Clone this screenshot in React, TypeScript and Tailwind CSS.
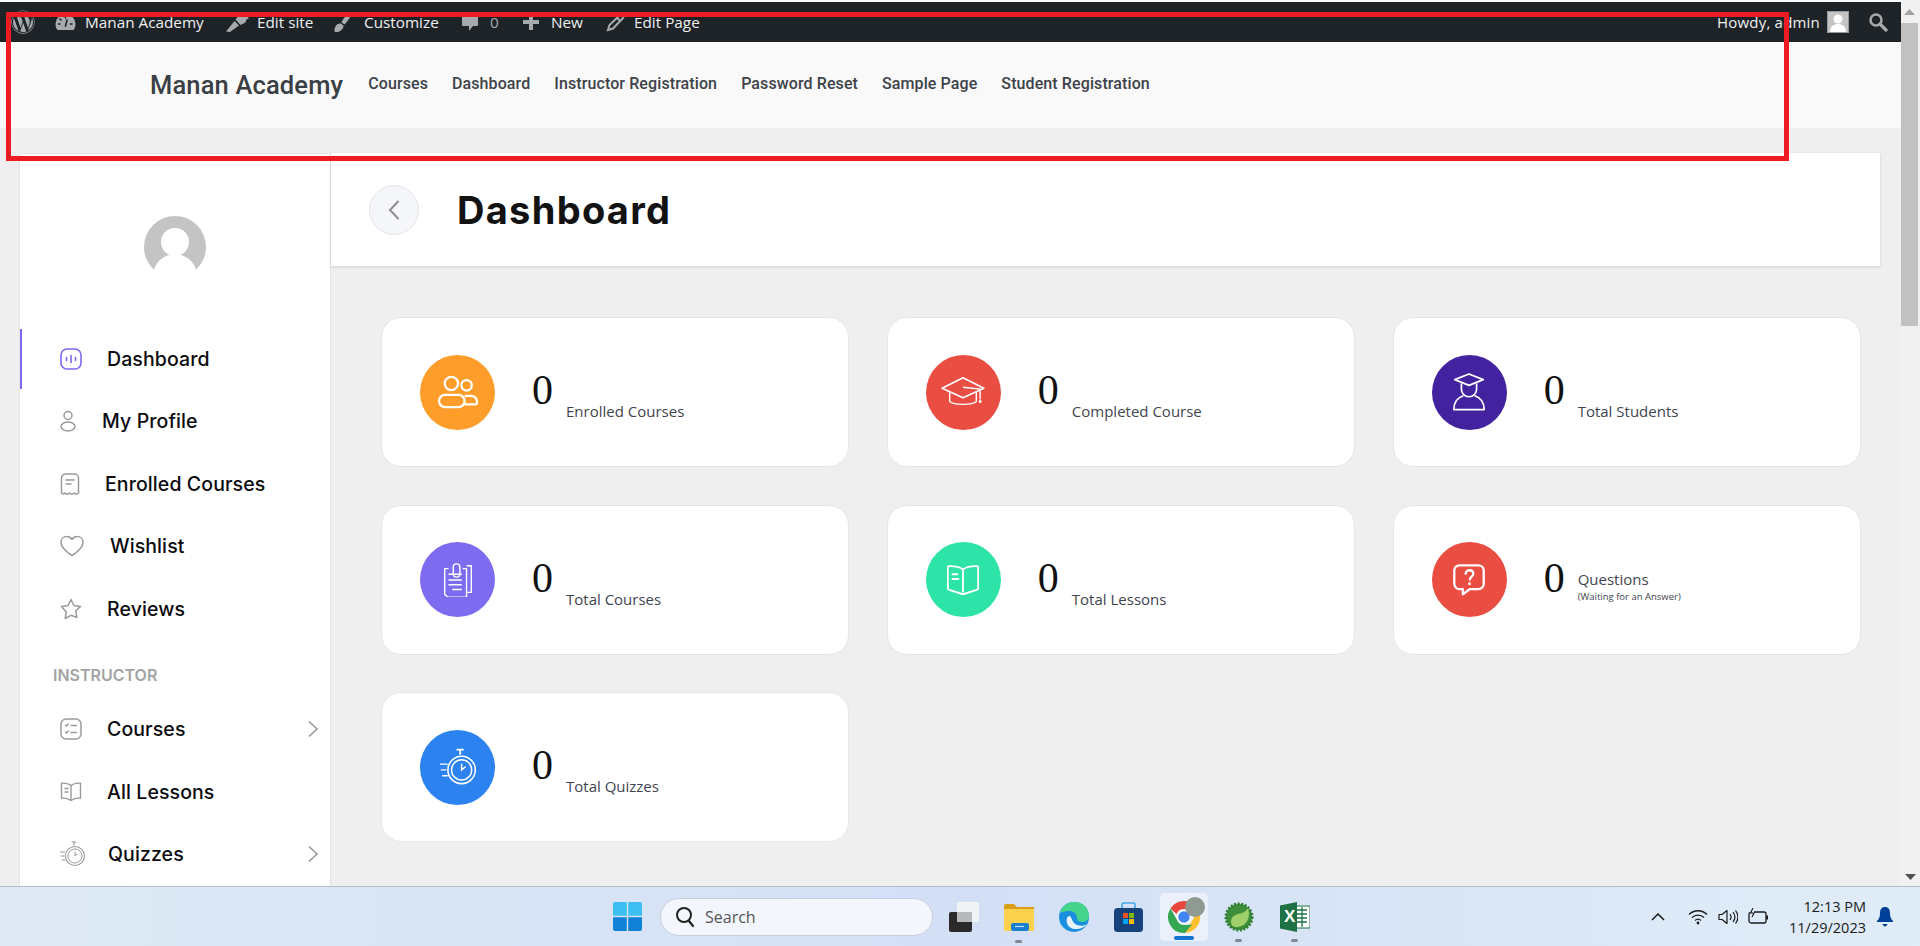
import React from "react";
import { FaWordpress } from "react-icons/fa";

const Ic = ({ w, h, vb, children, className = "" }: { w: number; h: number; vb: string; children: React.ReactNode; className?: string }) => (
  <svg width={w} height={h} viewBox={vb} className={"shrink-0 " + className}>{children}</svg>
);

const adminGray = "#a7aaad";

const adminLeft = [
  { cls: "ml-[20px]", tw: "w-[120px]", gap: "gap-[9px]", text: "Manan Academy", icon: (
    <Ic w={21} h={18} vb="0 0 21 18"><path fill={adminGray} d="M10.500 1A10 10 0 0 0 .5 11c0 2.500.8 4.600 2 6h16c1.200-1.400 2-3.500 2-6a10 10 0 0 0-10-10z" /><path stroke="#1d2327" strokeWidth="1.600" strokeLinecap="round" d="M5 6l1 1M3.500 11H5M10.500 3.500V5M15.500 11H17M12 7l-1.500 6" fill="none" /></Ic>
  ) },
  { cls: "ml-[20px]", tw: "w-[56px]", gap: "gap-[7px]", text: "Edit site", icon: (
    <Ic w={25} h={20} vb="0 0 25 20"><path fill={adminGray} d="M1 19.500l8.500-10.500 4.500 4.500-9 6.500zM10.500 7.500L16 1l8 .5-2.500 2.500 2.500 2.500-2.500 1-1 3-5 2.500z" /></Ic>
  ) },
  { cls: "ml-[20px]", tw: "w-[75px]", gap: "gap-[11px]", text: "Customize", icon: (
    <Ic w={20} h={22} vb="0 0 20 22"><path fill={adminGray} d="M18 1c1 0 1.200 1 .7 2.200C16.500 7.500 14 11 11.500 13.500L8.500 11.500C10 7.500 14 3 18 1zM7.500 12.500l3 2c.2 3.500-3.500 7-7.500 6.500-1.500-.2-2-1-1.500-2.500.5-2 1-3.500 2-4.500 1-1 2.500-1.500 4-1.500z" /></Ic>
  ) },
  { cls: "ml-[22px]", tw: "w-[9px]", gap: "gap-[11px]", text: "0", dim: true, icon: (
    <Ic w={18} h={20} vb="0 0 18 20"><path fill={adminGray} d="M2 1h14a1 1 0 0 1 1 1v11a1 1 0 0 1-1 1h-4l-4 5v-5H2a1 1 0 0 1-1-1V2a1 1 0 0 1 1-1z" /></Ic>
  ) },
  { cls: "ml-[23px]", tw: "w-[32px]", gap: "gap-[11px]", text: "New", icon: (
    <Ic w={18} h={18} vb="0 0 18 18"><path fill={adminGray} d="M7 1h4v6h6v4h-6v6H7v-6H1V7h6z" /></Ic>
  ) },
  { cls: "ml-[22px]", tw: "w-[66px]", gap: "gap-[6px]", text: "Edit Page", icon: (
    <Ic w={23} h={20} vb="0 0 23 20"><path fill="none" stroke={adminGray} strokeWidth="2" d="M3 18l1.500-5L15 3c1.500-1.500 4.500 1 3 3L8 16.500zM12 6l3.500 3" /></Ic>
  ) },
];

const nav = ["Courses", "Dashboard", "Instructor Registration", "Password Reset", "Sample Page", "Student Registration"];

const g = "#9b9b9b";
const DashIcon = (
  <Ic w={22} h={22} vb="0 0 22 22"><rect x="1" y="1" width="20" height="20" rx="6" fill="none" stroke="#7a6af0" strokeWidth="1.600" /><path d="M6.500 9.500v3M11 7.500v7M15.500 9.500v3" stroke="#7a6af0" strokeWidth="1.600" strokeLinecap="round" /></Ic>
);
const ProfileIcon = (
  <Ic w={16} h={22} vb="0 0 16 22"><circle cx="8" cy="5.500" r="4" fill="none" stroke={g} strokeWidth="1.500" /><ellipse cx="8" cy="16.500" rx="7" ry="4.500" fill="none" stroke={g} strokeWidth="1.500" /></Ic>
);
const EnrolledIcon = (
  <Ic w={20} h={22} vb="0 0 20 22"><path d="M1.500 20V5a4 4 0 0 1 4-4h9a4 4 0 0 1 4 4v15c-1.500 1.500-3 1.500-4.500 0-1.500 1.500-3 1.500-4.500 0-1.500 1.500-3 1.500-4.500 0-1.500 1.500-2.500 1-3.500 0z" fill="none" stroke={g} strokeWidth="1.500" /><path d="M6 7h8M6 11h5" stroke={g} strokeWidth="1.500" strokeLinecap="round" /></Ic>
);
const HeartIcon = (
  <Ic w={24} h={22} vb="0 0 24 22"><path d="M12 20.500C5 16 1 12 1 7.500 1 4 3.500 1.500 6.800 1.500c2.200 0 4 1.200 5.200 3 1.200-1.800 3-3 5.200-3C20.500 1.500 23 4 23 7.500c0 4.500-4 8.500-11 13z" fill="none" stroke={g} strokeWidth="1.500" strokeLinejoin="round" /></Ic>
);
const StarIcon = (
  <Ic w={22} h={22} vb="0 0 22 22"><path d="M11 1.500l2.900 6 6.600.9-4.800 4.600 1.200 6.500L11 17.300 5.100 20.500l1.200-6.500L1.500 8.400l6.600-.9z" fill="none" stroke={g} strokeWidth="1.500" strokeLinejoin="round" /></Ic>
);
const CoursesIcon = (
  <Ic w={22} h={22} vb="0 0 22 22"><rect x="1" y="1" width="20" height="20" rx="5" fill="none" stroke={g} strokeWidth="1.500" /><path d="M5.500 7l1 1 2-2M5.500 14l1 1 2-2M11 7.500h5.500M11 14.500h5.500" fill="none" stroke={g} strokeWidth="1.400" strokeLinecap="round" /></Ic>
);
const LessonsIcon = (
  <Ic w={22} h={20} vb="0 0 22 20"><path d="M11 3.500C9 1.800 5 1 1.500 1.200v15c3.500-.2 7 .6 9.500 2.300 2.500-1.700 6-2.500 9.500-2.300v-15C17 1 13 1.800 11 3.500zM11 3.500v15M5 6.500h3M5 10h3" fill="none" stroke={g} strokeWidth="1.400" strokeLinecap="round" strokeLinejoin="round" /></Ic>
);
const QuizIcon = ({ c = g, w: width = 25, h: height = 26 }: { c?: string; w?: number; h?: number }) => (
  <Ic w={width} h={height} vb="0 0 25 26"><path d="M12 1h4M14 1v3" stroke={c} strokeWidth="1.200" fill="none" strokeLinecap="round" /><circle cx="15" cy="15" r="9.500" fill="none" stroke={c} strokeWidth="1.100" /><circle cx="15" cy="15" r="7" fill="none" stroke={c} strokeWidth="1" /><path d="M15 11v4l2.500-2M0 11h5M1 15h3M2 19h3" stroke={c} strokeWidth="1" fill="none" strokeLinecap="round" /></Ic>
);

const Chevron = (
  <svg width="12" height="18" viewBox="0 0 12 18" className="absolute right-[11px]"><path d="M2 1.500L10 9l-8 7.500" fill="none" stroke="#9b9b9b" strokeWidth="1.700" /></svg>
);

const MenuRow = ({ icon, box, text, active, chevron }: { icon: React.ReactNode; box: string; text: string; active?: boolean; chevron?: boolean }) => (
  <div className="relative flex h-[62.500px] items-center pl-[40px]">
    {active && <div className="absolute left-0 top-[1px] h-[60px] w-[2px] bg-[#7a6af0]" />}
    <div className={"flex items-center " + box}>{icon}</div>
    <span className="font-['Inter',sans-serif] text-[19.500px] font-medium leading-[24px] tracking-[0.1px] text-[#0b0b10]">{text}</span>
    {chevron && Chevron}
  </div>
);

const w = "#ffffff";
const cardIcons = {
  users: (
    <Ic w={44} h={38} vb="0 0 44 38"><circle cx="15" cy="10" r="7" fill="none" stroke={w} strokeWidth="2.400" /><circle cx="31" cy="12" r="5.500" fill="none" stroke={w} strokeWidth="2.400" /><rect x="2" y="22" width="27" height="13" rx="6.500" fill="none" stroke={w} strokeWidth="2.400" /><path d="M29 23h7a6 6 0 0 1 6 6v1a2 2 0 0 1-2 2H29" fill="none" stroke={w} strokeWidth="2.400" /></Ic>
  ),
  cap: (
    <Ic w={46} h={32} vb="0 0 46 32"><path d="M1 12L23 1l22 11-22 10z" fill="none" stroke={w} strokeWidth="1.800" strokeLinejoin="round" /><path d="M9 16v10c4 4 24 4 28 0V16" fill="none" stroke={w} strokeWidth="1.500" /><path d="M23 11l18 2v11" fill="none" stroke={w} strokeWidth="1.500" /><circle cx="41" cy="26" r="1.600" fill={w} /></Ic>
  ),
  student: (
    <Ic w={34} h={40} vb="0 0 34 40"><path d="M2 7L17 1l15 6-15 6z" fill="none" stroke={w} strokeWidth="1.800" strokeLinejoin="round" /><path d="M9 11v6a8 8 0 0 0 16 0v-6" fill="none" stroke={w} strokeWidth="1.800" /><path d="M11 24C5 26 1 31 1 38.500h32C33 31 29 26 23 24" fill="none" stroke={w} strokeWidth="1.800" strokeLinejoin="round" /></Ic>
  ),
  clip: (
    <Ic w={30} h={36} vb="0 0 30 36"><path d="M5 6H1v27l3 3h20V6h-4" fill="none" stroke={w} strokeWidth="1.500" /><path d="M24 3h5v28h-5" fill="none" stroke={w} strokeWidth="1.500" /><rect x="10" y="1" width="7" height="14" rx="3.500" fill="none" stroke={w} strokeWidth="1.500" /><path d="M5 12h14M5 18h14M5 23h14M9 28h10" stroke={w} strokeWidth="1.700" /></Ic>
  ),
  book: (
    <Ic w={34} h={32} vb="0 0 34 32"><path d="M17 5C14 2 6 1 2 1.500a1 1 0 0 0-1 1v22c0 1 .5 1.500 1.500 1.800L17 31l14.500-4.700c1-.3 1.500-.8 1.500-1.800v-22a1 1 0 0 0-1-1C28 1 20 2 17 5zM17 5v24" fill="none" stroke={w} strokeWidth="2" strokeLinejoin="round" /><path d="M6 10h5M6 15h6" stroke={w} strokeWidth="2.200" strokeLinecap="round" /></Ic>
  ),
  question: (
    <Ic w={34} h={34} vb="0 0 34 34"><path d="M7 1.500h20a5.500 5.500 0 0 1 5.500 5.500v14a5.500 5.500 0 0 1-5.500 5.500H18L10.500 32V26.500H7A5.500 5.500 0 0 1 1.500 21V7A5.500 5.500 0 0 1 7 1.500z" fill="none" stroke={w} strokeWidth="2.400" strokeLinejoin="round" /><path d="M13.500 10.500c0-5 8-5 8 0 0 3-3.500 3-3.500 6" fill="none" stroke={w} strokeWidth="2.400" strokeLinecap="round" /><circle cx="17.500" cy="21" r="1.500" fill={w} /></Ic>
  ),
};

type Card = { color: string; icon: React.ReactNode; label: string; sub?: string };
const cards: Card[] = [
  { color: "bg-[#ff9d2a]", icon: cardIcons.users, label: "Enrolled Courses" },
  { color: "bg-[#ea4d42]", icon: cardIcons.cap, label: "Completed Course" },
  { color: "bg-[#42229f]", icon: cardIcons.student, label: "Total Students" },
  { color: "bg-[#7d6cf0]", icon: cardIcons.clip, label: "Total Courses" },
  { color: "bg-[#2ee3a8]", icon: cardIcons.book, label: "Total Lessons" },
  { color: "bg-[#ea4d42]", icon: cardIcons.question, label: "Questions", sub: "(Waiting for an Answer)" },
  { color: "bg-[#2c83f0]", icon: <QuizIcon c="#ffffff" w={38} h={40} />, label: "Total Quizzes" },
];

const StatCard = ({ c }: { c: Card }) => (
  <div className="flex h-[150px] items-center rounded-[20px] border border-[#e6e6e6] bg-white pl-[38px]">
    <div className={"flex h-[75px] w-[75px] items-center justify-center rounded-full " + c.color}>
      <div className="scale-[0.95]">{c.icon}</div>
    </div>
    <div className="ml-[37px] flex h-[56px] w-[34px] items-start pt-[5px]">
      <span className="font-['Liberation_Serif',serif] text-[42px] leading-[42px] text-[#111]">0</span>
    </div>
    {c.sub ? (
      <div className="mt-[14px] flex flex-col font-['Open_Sans',sans-serif] text-[#41454f]">
        <span className="text-[15px] leading-[20px]">{c.label}</span>
        <span className="text-[9.500px] leading-[16px]">{c.sub}</span>
      </div>
    ) : (
      <div className="mt-[38px] font-['Open_Sans',sans-serif] text-[15px] leading-[20px] text-[#41454f]">{c.label}</div>
    )}
  </div>
);

const Chrome = (
  <svg width="36" height="36" viewBox="0 0 36 36">
    <path d="M18 2a16 16 0 0 1 14 8H18a8 8 0 0 0-7.500 5L4.500 9.500A16 16 0 0 1 18 2z" fill="#e8453c" />
    <path d="M32 10a16 16 0 0 1-13 24l7-12a8 8 0 0 0-1-12z" fill="#fbc02d" />
    <path d="M19 34A16 16 0 0 1 4.500 9.500l6.500 11.500a8 8 0 0 0 8 5l7-.5z" fill="#34a853" />
    <circle cx="18" cy="18" r="6.500" fill="#4285f4" stroke="#fff" strokeWidth="1.500" />
  </svg>
);

export default function App() {
  return (
    <div className="relative flex h-[946px] w-[1920px] flex-col overflow-hidden bg-white">
      <div className="flex h-[886px] w-full">
        <div className="flex h-full w-[1901px] flex-col bg-[#efefef]">
          <div className="h-[2px] bg-white" />
          {/* admin bar */}
          <div className="flex h-[40px] items-center bg-[#1d2327] pl-[11px] pr-[13px] font-['Open_Sans',sans-serif] text-[15.300px] text-[#f0f0f1]">
            <FaWordpress size={24} color={adminGray} />
            {adminLeft.map((it) => (
              <div key={it.text} className={"flex items-center " + it.cls + " " + it.gap}>
                {it.icon}
                <span className={"whitespace-nowrap " + it.tw + (it.dim ? " text-[#a7aaad]" : "")}>{it.text}</span>
              </div>
            ))}
            <div className="ml-auto flex items-center">
              <span className="text-[15px] tracking-[0.2px]">Howdy, admin</span>
              <div className="ml-[7px] flex h-[22px] w-[22px] items-end justify-center overflow-hidden border border-[#9a9a9a] bg-[#c4c4c4]">
                <svg width="20" height="20" viewBox="0 0 20 20"><circle cx="10" cy="7" r="4.500" fill="#fff" /><path d="M2 20c0-6 4-8 8-8s8 2 8 8z" fill="#fff" /></svg>
              </div>
              <svg width="20" height="20" viewBox="0 0 20 20" className="ml-[19px]"><circle cx="8" cy="8" r="5.500" fill="none" stroke={adminGray} strokeWidth="2.500" /><path d="M12 12l6 6" stroke={adminGray} strokeWidth="3.200" strokeLinecap="round" /></svg>
            </div>
          </div>
          {/* site header */}
          <div className="flex h-[86px] items-center bg-[#f9f9f9] pl-[150px]">
            <span className="font-['Roboto',sans-serif] text-[25.500px] font-medium leading-[30px] tracking-[0.15px] text-[#3a3f45]">Manan Academy</span>
            <nav className="ml-[25px] flex gap-[24px] pb-[3px] font-['Roboto',sans-serif] text-[16px] font-medium tracking-[0.1px] text-[#3d4249]">
              {nav.map((n) => <span key={n} className="whitespace-nowrap">{n}</span>)}
            </nav>
          </div>
          {/* dashboard */}
          <div className="flex min-h-0 flex-1 pl-[19px] pr-[21px] pt-[25px]">
            <aside className="h-[800px] w-[312px] shrink-0 border border-[#e4e4e4] bg-white pt-[62px]">
              <div className="ml-[124px] h-[62px] w-[62px] overflow-hidden">
                <svg width="62" height="62" viewBox="0 0 62 62">
                  <defs><clipPath id="av"><path d="M0 0h62v54H0z" /></clipPath></defs>
                  <g clipPath="url(#av)"><circle cx="31" cy="31" r="31" fill="#c4c4c4" /><circle cx="31" cy="26" r="14" fill="#fff" /><ellipse cx="31" cy="60" rx="22" ry="22" fill="#fff" /></g>
                </svg>
              </div>
              <div className="mt-[49.500px]">
                <MenuRow active icon={DashIcon} box="w-[47px]" text="Dashboard" />
                <MenuRow icon={ProfileIcon} box="w-[42px]" text="My Profile" />
                <MenuRow icon={EnrolledIcon} box="w-[45px]" text="Enrolled Courses" />
                <MenuRow icon={HeartIcon} box="w-[50px]" text="Wishlist" />
                <MenuRow icon={StarIcon} box="w-[47px]" text="Reviews" />
                <div className="flex h-[58px] items-start pl-[33px] pt-[23.500px] font-['Inter',sans-serif] text-[16px] font-semibold leading-[22px] text-[#a3a3a3]">INSTRUCTOR</div>
                <MenuRow chevron icon={CoursesIcon} box="w-[47px]" text="Courses" />
                <MenuRow icon={LessonsIcon} box="w-[47px]" text="All Lessons" />
                <MenuRow chevron icon={<QuizIcon />} box="w-[48px]" text="Quizzes" />
              </div>
            </aside>
            <main className="min-w-0 flex-1">
              <div className="flex h-[113px] items-center bg-white pl-[38px] shadow-[0_1px_3px_rgba(0,0,0,0.12)]">
                <div className="flex h-[50px] w-[50px] items-center justify-center rounded-full border border-[#e2e4e8] bg-[#f5f6f9]">
                  <svg width="14" height="22" viewBox="0 0 14 22"><path d="M11.500 2L3 11l8.500 9" fill="none" stroke="#8f8f8f" strokeWidth="2" /></svg>
                </div>
                <h1 className="ml-[38px] font-['Inter',sans-serif] text-[38px] font-bold leading-[44px] tracking-[1.300px] text-[#121212]">Dashboard</h1>
              </div>
              <div className="ml-[50px] mt-[51px] grid w-[1480px] grid-cols-3 gap-x-[37.500px] gap-y-[37.500px]">
                {cards.map((c) => <StatCard key={c.label} c={c} />)}
              </div>
            </main>
          </div>
        </div>
        {/* page scrollbar */}
        <div className="flex h-full w-[19px] flex-col bg-[#f1f1f1] pr-[2px]">
          <div className="flex h-[23px] items-center justify-center"><svg width="11" height="6" viewBox="0 0 11 6"><path d="M5.500 0L11 6H0z" fill="#a3a3a3" /></svg></div>
          <div className="h-[303px] bg-[#c1c1c1]" />
          <div className="mb-[6px] mt-auto flex justify-center pl-[1px]"><svg width="11" height="6" viewBox="0 0 11 6"><path d="M5.500 6L11 0H0z" fill="#505050" /></svg></div>
        </div>
      </div>

      {/* taskbar */}
      <div className="relative flex h-[60px] items-center border-t border-[#b6bdc8] bg-gradient-to-r from-[#dfeaf6] via-[#d3dff5] to-[#e0edf8] pl-[613px] font-['Open_Sans',sans-serif]">
        <svg width="29" height="29" viewBox="0 0 29 29" className="shrink-0"><path fill="#3cc0f4" d="M0 2a2 2 0 0 1 2-2h11.800v13.800H0zM15.200 0H27a2 2 0 0 1 2 2v11.800H15.200z" /><path fill="#0f82d8" d="M0 15.200h13.800V29H2a2 2 0 0 1-2-2zM15.200 15.200H29V27a2 2 0 0 1-2 2H15.200z" /></svg>
        <div className="ml-[18px] flex h-[38px] w-[273px] items-center rounded-full border border-[#c6cfdf] bg-[#f3f6fd] pl-[14px] text-[16px] text-[#555]">
          <svg width="20" height="22" viewBox="0 0 20 22"><circle cx="9" cy="9" r="7" fill="none" stroke="#222" strokeWidth="2" /><path d="M14 15l4 5" stroke="#222" strokeWidth="2.200" strokeLinecap="round" /></svg>
          <span className="ml-[10px]">Search</span>
        </div>
        <div className="ml-[16px] flex h-[48px] w-[31px] shrink-0 items-center">
          <svg width="31" height="30" viewBox="0 0 31 30"><rect x="0" y="10" width="23" height="20" rx="2" fill="#2a2a2a" /><rect x="8" y="0" width="22" height="20" rx="2" fill="#f2f3f7" /><rect x="8" y="10" width="15" height="10" fill="#b8b9bd" /></svg>
        </div>
        <div className="relative ml-[24px] w-[30px] shrink-0">
          <svg width="30" height="28" viewBox="0 0 30 28"><path d="M0 3a2 2 0 0 1 2-2h8l3 3h17v3H0z" fill="#d99e17" /><path d="M0 6h30v22H0z" fill="#fcd14d" /><rect x="7" y="20" width="18" height="8" rx="2" fill="#1a7fd0" /><path d="M11 23.500h9" stroke="#bfe2fa" strokeWidth="1.200" /></svg>
          <div className="absolute left-[11px] top-[37px] h-[3px] w-[7px] rounded-full bg-[#808592]" />
        </div>
        <div className="ml-[25px] w-[30px] shrink-0">
          <svg width="30" height="30" viewBox="0 0 30 30"><circle cx="15" cy="15" r="15" fill="#1a8fe0" /><path d="M1 11C3 3 10 0 16 0c8 0 14 6 14 14 0 4-3 6-7 6-3 0-5-2-5-4 0-5-4-7-8-7-4 0-7 1-9 2z" fill="#46d38c" /><path d="M11 14c-3 0-4 3-3 7 1 4 5 6 9 6 4 0 8-1 11-5-4 3-10 2-13-1-2-2-2-5-4-7z" fill="#fff" opacity="0.9" /></svg>
        </div>
        <div className="ml-[25px] w-[29px] shrink-0">
          <svg width="29" height="30" viewBox="0 0 29 30"><path d="M8 7V2.500A1.500 1.500 0 0 1 9.500 1h10A1.500 1.500 0 0 1 21 2.500V7" fill="none" stroke="#3ea7e8" strokeWidth="1.600" /><rect x="0" y="6" width="29" height="24" rx="3.500" fill="#17427c" /><rect x="9" y="11" width="5" height="5" fill="#f25022" /><rect x="15" y="11" width="5" height="5" fill="#7fba00" /><rect x="9" y="17" width="5" height="5" fill="#00a4ef" /><rect x="15" y="17" width="5" height="5" fill="#ffb900" /></svg>
        </div>
        <div className="relative ml-[17px] flex h-[48px] w-[48px] shrink-0 items-center justify-center rounded-[5px] bg-[#ecf0fa]">
          {Chrome}
          <div className="absolute left-[25px] top-[4px] h-[20px] w-[20px] rounded-full bg-[#8f9a93]" />
          <div className="absolute bottom-[1px] left-[14px] h-[4px] w-[20px] rounded-full bg-[#1273d0]" />
        </div>
        <div className="relative ml-[16px] w-[30px] shrink-0">
          <svg width="30" height="30" viewBox="0 0 30 30"><circle cx="15" cy="15" r="13" fill="#3f8f3a" stroke="#2f7d32" strokeWidth="3" strokeDasharray="2 1.500" /><path d="M24 6c3 9-1 19-12 19-3 0-5-2-5-5 0-7 7-8 11-9 3-1 5-3 6-5z" fill="#9fd06a" /></svg>
          <div className="absolute left-[11px] top-[37px] h-[3px] w-[7px] rounded-full bg-[#808592]" />
        </div>
        <div className="relative ml-[26px] w-[30px] shrink-0">
          <svg width="30" height="30" viewBox="0 0 30 30"><rect x="14" y="4" width="16" height="22" fill="#fff" stroke="#1e7145" strokeWidth="1" /><path d="M17 8h10M17 12h10M17 16h10M17 20h10M22 5v20" stroke="#1e7145" strokeWidth="1.300" /><path d="M0 3.500L17 0v30L0 26.500z" fill="#1e7145" /></svg>
          <span className="absolute left-[4px] top-[4px] font-['Liberation_Sans',sans-serif] text-[17px] font-bold leading-[22px] text-white">X</span>
          <div className="absolute left-[11px] top-[37px] h-[3px] w-[7px] rounded-full bg-[#808592]" />
        </div>

        <div className="ml-[341px] flex items-center">
          <svg width="14" height="8" viewBox="0 0 14 8"><path d="M1 7l6-6 6 6" fill="none" stroke="#1a1a1a" strokeWidth="1.500" /></svg>
          <svg width="20" height="16" viewBox="0 0 20 16" className="ml-[23px]"><path d="M1 5.500c5-5 13-5 18 0M4 8.500c3.500-3.300 8.500-3.300 12 0M7 11.500c1.700-1.500 4.300-1.500 6 0" fill="none" stroke="#1a1a1a" strokeWidth="1.300" /><circle cx="10" cy="14" r="1.400" fill="#1a1a1a" /></svg>
          <svg width="20" height="16" viewBox="0 0 20 16" className="ml-[10px]"><path d="M1 5.500h3L9 1.500v13L4 10.500H1z" fill="none" stroke="#1a1a1a" strokeWidth="1.200" strokeLinejoin="round" /><path d="M12 5c1.300 1.800 1.300 4.200 0 6M15 3c2.300 3 2.300 7 0 10M17.500 1.500c3 4 3 9 0 13" fill="none" stroke="#1a1a1a" strokeWidth="1.200" /></svg>
          <svg width="20" height="17" viewBox="0 0 20 17" className="ml-[10px]"><path d="M6 4h10a2 2 0 0 1 2 2v7a2 2 0 0 1-2 2H3a2 2 0 0 1-2-2V6a2 2 0 0 1 1-1.700" fill="none" stroke="#1a1a1a" strokeWidth="1.300" /><rect x="18" y="7.500" width="2" height="4" fill="#1a1a1a" /><path d="M5 0L2.500 5H6L4 9" fill="none" stroke="#1a1a1a" strokeWidth="1.100" /></svg>
          <div className="ml-[18px] flex w-[80px] flex-col items-end text-[14.500px] leading-[21px] text-[#1a1a1a]">
            <span className="whitespace-nowrap">12:13 PM</span>
            <span className="whitespace-nowrap">11/29/2023</span>
          </div>
          <svg width="16" height="20" viewBox="0 0 16 20" className="ml-[11px]"><path d="M8 0c3.500 0 5 2.700 5 6 0 4 1 6 3 8v1H0v-1c2-2 3-4 3-8 0-3.300 1.500-6 5-6z" fill="#003f98" /><path d="M5.500 17h5c-.5 1.500-1.500 2.500-2.500 2.500S6 18.500 5.500 17z" fill="#003f98" /></svg>
        </div>
      </div>

      {/* red annotation rectangle drawn over the screenshot */}
      <div className="pointer-events-none absolute left-[6px] top-[12px] h-[149px] w-[1783px] border-[5px] border-[#ed1c24]" />
    </div>
  );
}
